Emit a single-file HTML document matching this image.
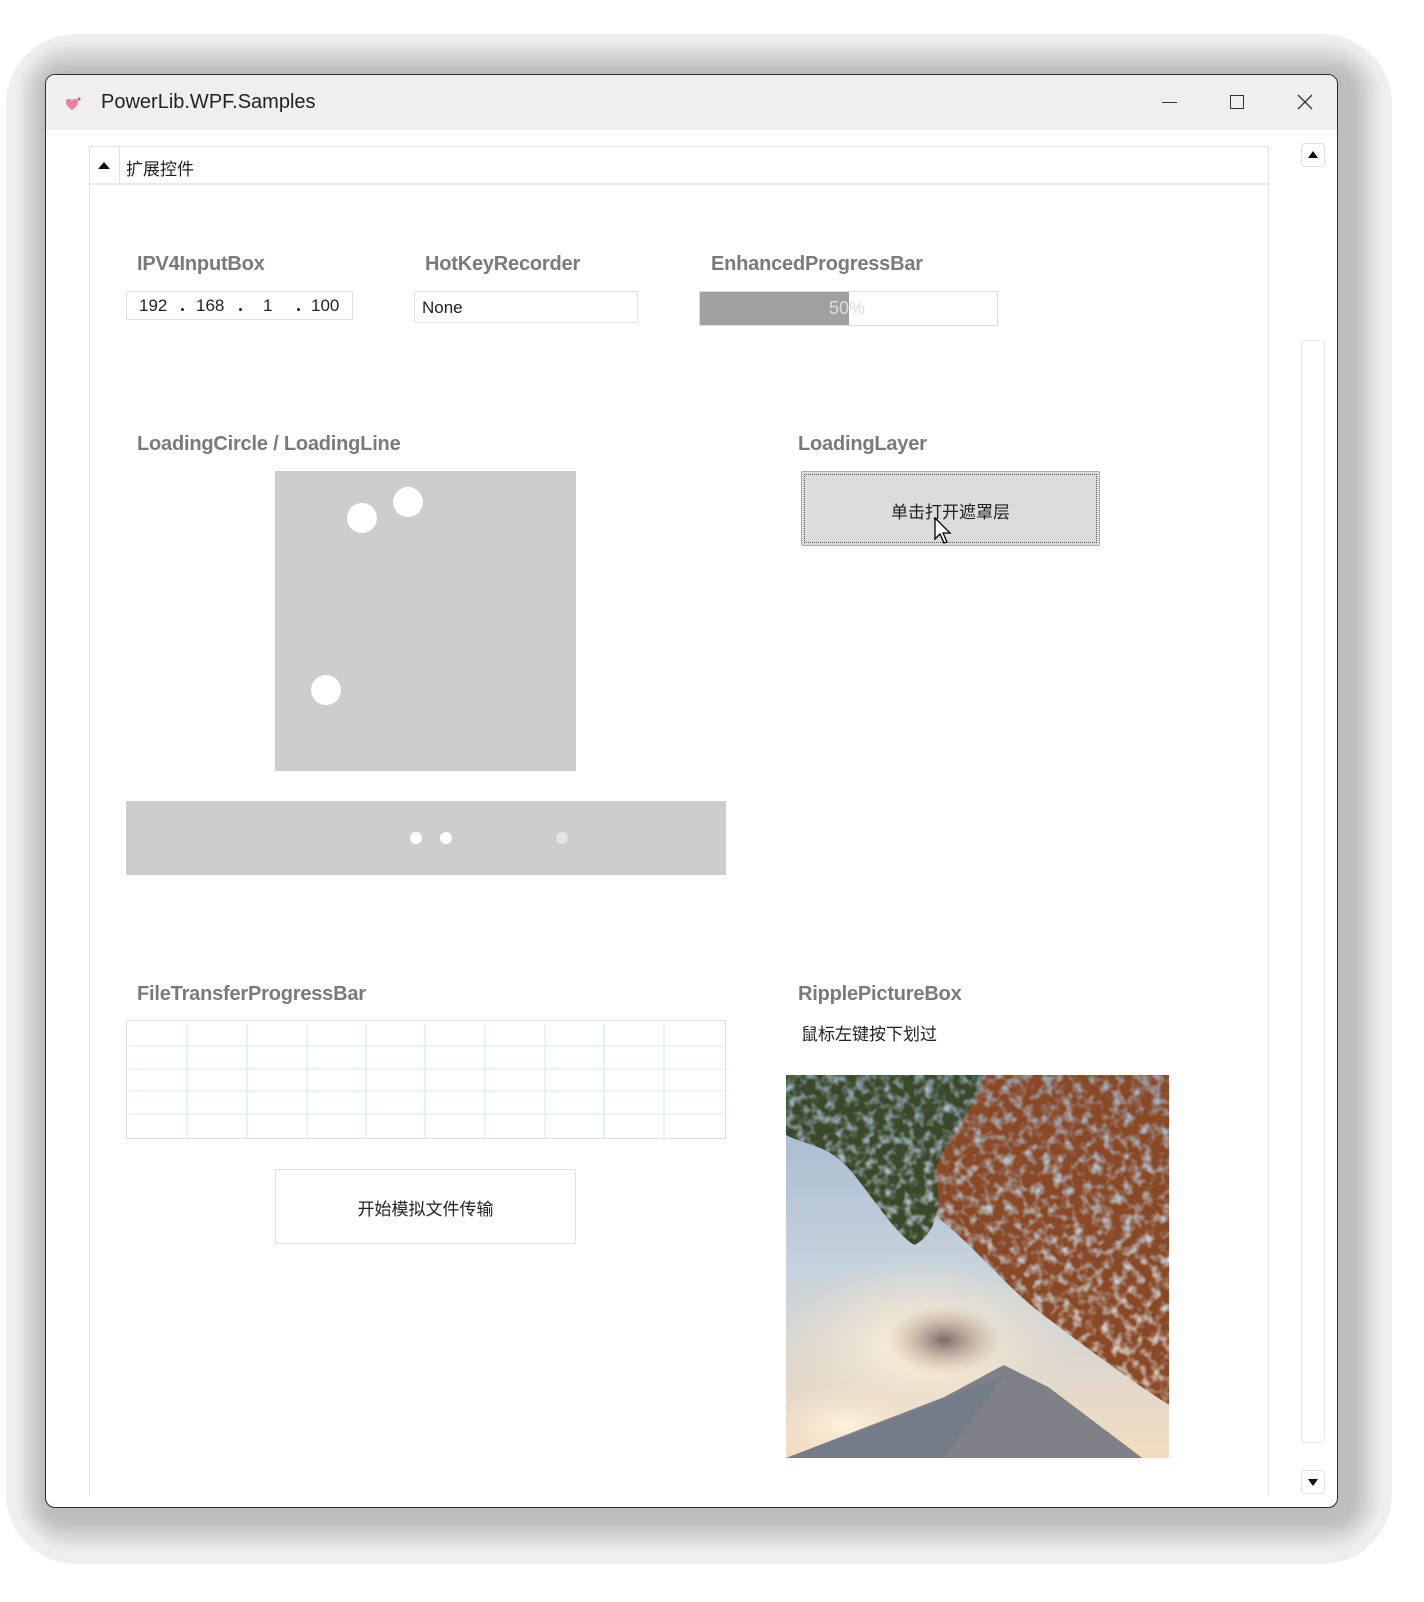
<!DOCTYPE html>
<html><head><meta charset="utf-8"><style>
*{margin:0;padding:0;box-sizing:border-box}
body{width:1424px;height:1602px;background:#fff;position:relative;overflow:hidden;font-family:"Liberation Sans","Noto Sans CJK SC",sans-serif}
.shadow{position:absolute;left:6px;top:34px;width:1386px;height:1530px;border-radius:70px;background:#efefef}
.shadow2{position:absolute;left:22px;top:46px;width:1354px;height:1500px;border-radius:50px;background:#dadada;filter:blur(5px)}
.shadow3{position:absolute;left:36px;top:62px;width:1326px;height:1468px;border-radius:30px;background:#bdbdbd;filter:blur(6px)}
.win{position:absolute;left:45px;top:74px;width:1293px;height:1434px;background:#fff;border:1.5px solid #2a2a3a;border-radius:10px;overflow:hidden}
.title{position:absolute;left:0;top:0;width:100%;height:55px;background:#efefef}
.abs{position:absolute}
.lbl{position:absolute;font-size:20px;color:#7a7a7a;font-weight:bold;letter-spacing:-0.2px}
.dot{position:absolute;top:16px;width:3px;height:3px;background:#222;border-radius:50%}
</style></head><body>
<div class="shadow"></div><div class="shadow2"></div><div class="shadow3"></div>
<div class="win">
 <div class="title">
  <svg class="abs" style="left:18px;top:21px" width="18" height="16" viewBox="0 0 18 16"><path d="M2 6 C2 2 7 2 8 5 C9 2 14 2 14 6 C14 10 8 14 8 14 C8 14 2 10 2 6Z" fill="#f07aa0"/><circle cx="15" cy="3" r="1.5" fill="#e05080"/></svg>
  <div class="abs" style="left:55px;top:16px;font-size:20px;color:#222">PowerLib.WPF.Samples</div>
  <div class="abs" style="left:1116px;top:27px;width:15px;height:1px;background:#333"></div>
  <div class="abs" style="left:1184px;top:20px;width:14px;height:14px;border:1.3px solid #333"></div>
  <svg class="abs" style="left:1251px;top:19px" width="16" height="16"><path d="M1 1L15 15M15 1L1 15" stroke="#333" stroke-width="1.3"/></svg>
 </div>
</div>
<div class="abs" style="left:89px;top:146px;width:1180px;height:1350px;border:1px solid #e4e4e4;border-bottom:none"></div>
<div class="abs" style="left:90px;top:183px;width:1178px;height:2px;background:#eaeaea"></div>
<div class="abs" style="left:119px;top:147px;width:1px;height:36px;background:#e4e4e4"></div>
<svg class="abs" style="left:98px;top:161px" width="12" height="8"><path d="M0 8L6 1L12 8Z" fill="#111"/></svg>
<div class="abs" style="left:126px;top:155px;font-size:17px;color:#222">扩展控件</div>
<div class="abs" style="left:1301px;top:143px;width:24px;height:24px;border:1px solid #e0e0e0;border-radius:4px"></div>
<svg class="abs" style="left:1308px;top:151px" width="10" height="7"><path d="M0 7L5 0L10 7Z" fill="#111"/></svg>
<div class="abs" style="left:1301px;top:340px;width:24px;height:1103px;border:1px solid #e8e8e8;border-radius:4px"></div>
<div class="abs" style="left:1301px;top:1470px;width:24px;height:24px;border:1px solid #e0e0e0;border-radius:4px"></div>
<svg class="abs" style="left:1308px;top:1479px" width="10" height="7"><path d="M0 0L5 7L10 0Z" fill="#111"/></svg>
<div class="lbl" style="left:137px;top:253px">IPV4InputBox</div>
<div class="lbl" style="left:425px;top:253px">HotKeyRecorder</div>
<div class="lbl" style="left:711px;top:253px">EnhancedProgressBar</div>
<div class="abs" style="left:126px;top:291px;width:227px;height:29px;border:1px solid #e0e0e0;font-size:17px;color:#222">
 <span class="abs" style="left:12px;top:4px">192</span><span class="dot" style="left:54px"></span>
 <span class="abs" style="left:69px;top:4px">168</span><span class="dot" style="left:112px"></span>
 <span class="abs" style="left:136px;top:4px">1</span><span class="dot" style="left:170px"></span>
 <span class="abs" style="left:184px;top:4px">100</span></div>
<div class="abs" style="left:414px;top:291px;width:224px;height:32px;border:1px solid #e0e0e0;border-radius:2px;font-size:17px;color:#222;padding:6px 0 0 7px">None</div>
<div class="abs" style="left:699px;top:291px;width:299px;height:35px;border:1px solid #ddd;background:#fff">
 <div class="abs" style="left:0;top:0;width:149px;height:33px;background:#a0a0a0"></div>
 <div class="abs" style="left:129px;top:6px;font-size:18px;color:#ddd">50%</div></div>
<div class="lbl" style="left:137px;top:433px">LoadingCircle / LoadingLine</div>
<div class="lbl" style="left:798px;top:433px">LoadingLayer</div>
<div class="abs" style="left:275px;top:471px;width:301px;height:300px;background:#cdcdcd">
 <div class="abs" style="left:72px;top:32px;width:30px;height:30px;border-radius:50%;background:#fff"></div>
 <div class="abs" style="left:118px;top:16px;width:30px;height:30px;border-radius:50%;background:#fff"></div>
 <div class="abs" style="left:36px;top:204px;width:30px;height:30px;border-radius:50%;background:#fff"></div>
</div>
<div class="abs" style="left:126px;top:801px;width:600px;height:74px;background:#cdcdcd">
 <div class="abs" style="left:284px;top:31px;width:12px;height:12px;border-radius:50%;background:#fff"></div>
 <div class="abs" style="left:314px;top:31px;width:12px;height:12px;border-radius:50%;background:#fff"></div>
 <div class="abs" style="left:430px;top:31px;width:12px;height:12px;border-radius:50%;background:#e4e4e4"></div>
</div>
<div class="abs" style="left:801px;top:471px;width:299px;height:75px;background:#dcdcdc;border:1px solid #aaa;border-radius:2px">
 <div class="abs" style="left:2px;top:2px;right:2px;bottom:2px;border:1px dotted #555"></div>
 <div class="abs" style="left:0;width:100%;top:26px;text-align:center;font-size:17px;color:#222">单击打开遮罩层</div>
</div>
<svg class="abs" style="left:934px;top:517px" width="20" height="30"><path d="M1 1L1 22L6 17L10 26L13 25L9 16L16 16Z" fill="#fff" stroke="#000" stroke-width="1.3"/></svg>
<div class="lbl" style="left:137px;top:983px">FileTransferProgressBar</div>
<div class="lbl" style="left:798px;top:983px">RipplePictureBox</div>
<div class="abs" style="left:801px;top:1020px;font-size:17px;color:#222">鼠标左键按下划过</div>
<svg class="abs" style="left:126px;top:1020px" width="601" height="120">
 <rect x="0.5" y="0.5" width="599" height="118" fill="#fff" stroke="#dedede"/>
 <g stroke="#dcefe6" stroke-width="1.3">
  <path d="M61 4V118M121 4V118M181 4V118M240 4V118M299 4V118M359 4V118M419 4V118M478 4V118M538 4V118"/>
  <path d="M3 26H598M3 49H598M3 71H598M3 94H598"/>
 </g>
</svg>
<div class="abs" style="left:275px;top:1169px;width:301px;height:75px;border:1px solid #e0e0e0;border-radius:2px;text-align:center;padding-top:25px;font-size:17px;color:#222">开始模拟文件传输</div>
<svg class="abs" style="left:786px;top:1075px" width="383" height="383" viewBox="0 0 387 383" preserveAspectRatio="none">
 <defs>
  <linearGradient id="sky" x1="0" y1="0" x2="0" y2="1"><stop offset="0" stop-color="#9fb4cc"/><stop offset=".5" stop-color="#c6d2dc"/><stop offset="1" stop-color="#f3dcc0"/></linearGradient>
  <radialGradient id="cl" cx=".5" cy=".5" r=".5"><stop offset="0" stop-color="#fff4dc"/><stop offset="1" stop-color="#f4e4cc" stop-opacity="0"/></radialGradient>
  <radialGradient id="dk" cx=".5" cy=".5" r=".5"><stop offset="0" stop-color="#7a6a66"/><stop offset="1" stop-color="#c0a590" stop-opacity="0"/></radialGradient>
  <filter id="n" x="0" y="0" width="100%" height="100%"><feTurbulence type="fractalNoise" baseFrequency="0.1" numOctaves="2" seed="3"/><feColorMatrix values="0 0 0 0 0 0 0 0 0 0 0 0 0 0 0 0 0 0 -2.5 2.1"/><feComposite in="SourceGraphic" operator="in"/></filter>
 </defs>
 <rect width="387" height="383" fill="url(#sky)"/>
 <ellipse cx="140" cy="270" rx="150" ry="90" fill="url(#cl)"/>
 <ellipse cx="160" cy="265" rx="60" ry="35" fill="url(#dk)"/>
 <ellipse cx="60" cy="350" rx="80" ry="40" fill="url(#cl)"/>
 <g filter="url(#n)">
  <path d="M110 0H387V330C340 300 300 270 260 240C220 210 190 170 150 140C120 100 110 60 110 0Z" fill="#8a4a28"/>
  <path d="M0 0H200C190 40 160 60 150 100C160 130 150 160 130 170C110 160 80 110 60 90C40 70 20 70 0 60Z" fill="#3a4a2a"/>
 </g>
 <path d="M0 383L160 322L220 290L265 312L360 383Z" fill="#7f8088"/>
 <path d="M0 383L120 340L220 300L160 383Z" fill="#6f7a88" opacity=".7"/>
</svg>
</body></html>
